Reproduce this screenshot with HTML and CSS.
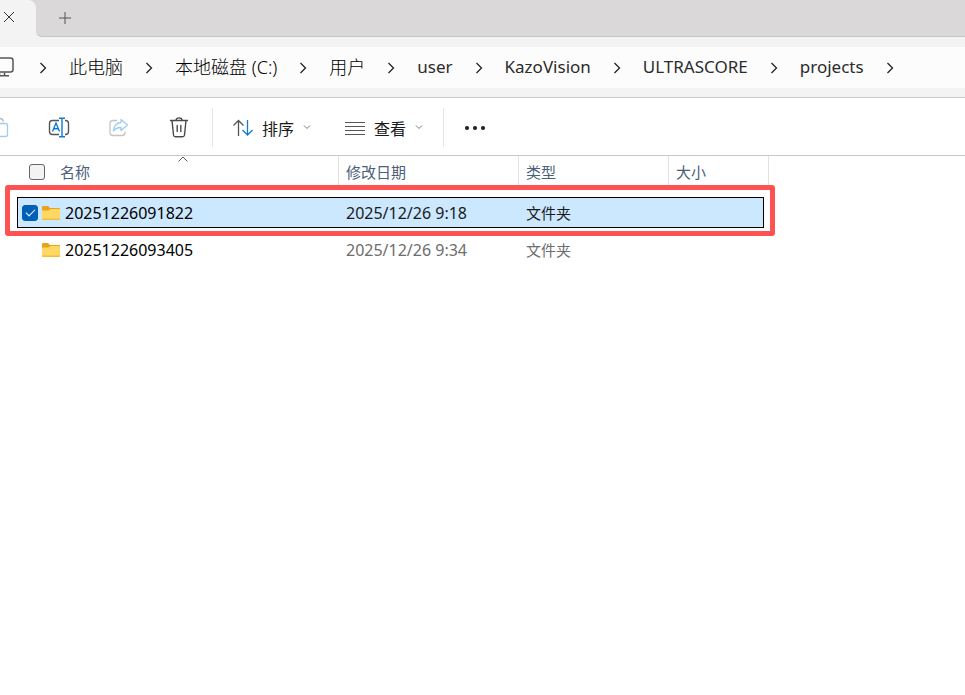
FILE: index.html
```html
<!DOCTYPE html>
<html lang="zh-CN">
<head>
    <meta charset="utf-8">
    <meta name="viewport" content="width=device-width,initial-scale=1.0">
    <title>projects</title>
    <link rel="stylesheet" href="styles.css">
</head>
<body>
    <div class="tabbar">
        <div class="tab">
            <button class="icon-btn" aria-label="关闭标签页">
                <svg width="12" height="12" viewBox="0 0 12 12"><path d="M1 1l10 10M11 1L1 11" fill="none" stroke="#333"/></svg>
            </button>
        </div>
        <div class="strip">
            <button class="icon-btn" aria-label="新建标签页">
                <svg width="12" height="12" viewBox="0 0 12 12"><path d="M0 6h12M6 0v12" fill="none" stroke="#555"/></svg>
            </button>
        </div>
    </div>

    <nav class="nav">
        <div class="address">
            <svg class="pc" width="24" height="20" viewBox="0 0 24 20" fill="none" stroke="#555" stroke-width="1.5"><rect x="1" y="1" width="22" height="14" rx="2.5"/><path d="M9.500 15.500v3M14.500 15.500v3M6 18.700h13"/></svg>
            <svg class="chev" viewBox="0 0 8 12"><path d="M1.500 1l5 5-5 5"/></svg>
            <a href="#" class="zh">此电脑</a>
            <svg class="chev" viewBox="0 0 8 12"><path d="M1.500 1l5 5-5 5"/></svg>
            <a href="#" class="zh">本地磁盘 (C:)</a>
            <svg class="chev" viewBox="0 0 8 12"><path d="M1.500 1l5 5-5 5"/></svg>
            <a href="#" class="zh">用户</a>
            <svg class="chev" viewBox="0 0 8 12"><path d="M1.500 1l5 5-5 5"/></svg>
            <a href="#">user</a>
            <svg class="chev" viewBox="0 0 8 12"><path d="M1.500 1l5 5-5 5"/></svg>
            <a href="#">KazoVision</a>
            <svg class="chev" viewBox="0 0 8 12"><path d="M1.500 1l5 5-5 5"/></svg>
            <a href="#">ULTRASCORE</a>
            <svg class="chev" viewBox="0 0 8 12"><path d="M1.500 1l5 5-5 5"/></svg>
            <a href="#">projects</a>
            <svg class="chev" viewBox="0 0 8 12"><path d="M1.500 1l5 5-5 5"/></svg>
        </div>
    </nav>

    <div class="toolbar">
        <button class="tool" aria-label="粘贴" disabled>
            <svg width="22" height="22" viewBox="0 0 22 22" fill="none" stroke-width="1.3"><path d="M8 20H5a2 2 0 0 1-2-2V5a2 2 0 0 1 2-2h1M12 1.500c2 0 3 1 3.500 3" stroke="#bbb"/><rect x="9" y="6.500" width="10.500" height="13" rx="2" stroke="#9fccf0"/></svg>
        </button>
        <button class="tool" aria-label="重命名">
            <svg width="22" height="22" viewBox="0 0 22 22" fill="none" stroke-width="1.4"><path d="M11 3.500H4.500a3 3 0 0 0-3 3v8a3 3 0 0 0 3 3H11M17 3.500h.5a3 3 0 0 1 3 3v8a3 3 0 0 1-3 3H17" stroke="#555"/><path d="M14 1.500v18M11 1.200h6M11 19.800h6M4.500 14.500L8 6l3.500 8.500M5.800 11.800h4.400" stroke="#0f7bd4"/></svg>
        </button>
        <button class="tool" aria-label="共享" disabled>
            <svg width="22" height="22" viewBox="0 0 22 22" fill="none" stroke-width="1.3" stroke-linejoin="round"><path d="M9 3.500H5a3 3 0 0 0-3 3v9a3 3 0 0 0 3 3h9a3 3 0 0 0 3-3v-1" stroke="#c4c4c4"/><path d="M13 2.500l6.500 5.500-6.500 5.500v-3c-3.500-.2-5.500 1-7.500 3.500.3-4.500 2.500-8 7.500-8.500z" stroke="#9fccf0"/></svg>
        </button>
        <button class="tool" aria-label="删除">
            <svg width="22" height="22" viewBox="0 0 22 22" fill="none" stroke="#4a4a4a" stroke-width="1.4" stroke-linecap="round"><path d="M2.500 3.500h17M8 3.500c0-3.500 6-3.500 6 0M4 3.500l1.500 14.500a2 2 0 0 0 2 1.800h7a2 2 0 0 0 2-1.800L18 3.500M9.200 8.500v6M12.800 8.500v6"/></svg>
        </button>
        <span class="sep"></span>
        <button class="tool menu">
            <svg width="20" height="18" viewBox="0 0 20 18" fill="none" stroke-width="1.3"><path d="M5.500 17V2M.5 6.500l5-5 5 5" stroke="#555"/><path d="M14.500 1v15M9.500 11l5 5 5-5" stroke="#0f7bd4"/></svg>
            <span>排序</span>
            <svg class="down" viewBox="0 0 8 5"><path d="M1 .5l3 3 3-3"/></svg>
        </button>
        <button class="tool menu">
            <svg width="20" height="18" viewBox="0 0 20 18"><path d="M0 3.500h20M0 7.500h20M0 11.500h20M0 15.500h20" fill="none" stroke="#555"/></svg>
            <span>查看</span>
            <svg class="down" viewBox="0 0 8 5"><path d="M1 .5l3 3 3-3"/></svg>
        </button>
        <span class="sep"></span>
        <button class="tool more" aria-label="更多">
            <svg width="20" height="4" viewBox="0 0 20 4" fill="#1a1a1a"><circle cx="2" cy="2" r="2"/><circle cx="10" cy="2" r="2"/><circle cx="18" cy="2" r="2"/></svg>
        </button>
    </div>

    <main class="list">
        <table class="files">
            <colgroup><col class="c-name"><col class="c-date"><col class="c-type"><col class="c-size"></colgroup>
            <thead>
                <tr>
                    <th>
                        <div class="head-name">
                            <input type="checkbox" class="check" aria-label="全选">
                            <span>名称</span>
                            <svg class="sort-mark" width="10" height="6" viewBox="0 0 10 6"><path d="M.5 5.500L5 1l4.500 4.500" fill="none" stroke="#555"/></svg>
                        </div>
                    </th>
                    <th>修改日期</th>
                    <th>类型</th>
                    <th>大小</th>
                </tr>
            </thead>
            <tbody>
                <tr class="selected">
                    <td>
                        <div class="name">
                            <input type="checkbox" class="check" aria-label="20251226091822" checked>
                            <svg width="18" height="14" viewBox="0 0 18 14"><path d="M0 1a1 1 0 0 1 1-1h5l2 2h9a1 1 0 0 1 1 1v4H0z" fill="#e8a317"/><path d="M0 4.500h6.500l2-1.500H17a1 1 0 0 1 1 1v9a1 1 0 0 1-1 1H1a1 1 0 0 1-1-1z" fill="#ffd765"/><path d="M0 12.500h18v.5a1 1 0 0 1-1 1H1a1 1 0 0 1-1-1z" fill="#f3bd3c"/></svg>
                            <span>20251226091822</span>
                        </div>
                    </td>
                    <td>2025/12/26 9:18</td>
                    <td class="type">文件夹</td>
                    <td></td>
                </tr>
                <tr>
                    <td>
                        <div class="name">
                            <input type="checkbox" class="check off" aria-label="20251226093405">
                            <svg width="18" height="14" viewBox="0 0 18 14"><path d="M0 1a1 1 0 0 1 1-1h5l2 2h9a1 1 0 0 1 1 1v4H0z" fill="#e8a317"/><path d="M0 4.500h6.500l2-1.500H17a1 1 0 0 1 1 1v9a1 1 0 0 1-1 1H1a1 1 0 0 1-1-1z" fill="#ffd765"/><path d="M0 12.500h18v.5a1 1 0 0 1-1 1H1a1 1 0 0 1-1-1z" fill="#f3bd3c"/></svg>
                            <span>20251226093405</span>
                        </div>
                    </td>
                    <td>2025/12/26 9:34</td>
                    <td class="type">文件夹</td>
                    <td></td>
                </tr>
            </tbody>
        </table>
        <div class="highlight"></div>
    </main>
</body>
</html>
```

FILE: styles.css
```css
* { box-sizing: border-box; }
body { margin: 0; background: #fff; color: #1a1a1a; font-family: "Noto Sans", "Noto Sans CJK SC", sans-serif; font-size: 16px; overflow-x: hidden; }
button { border: 0; padding: 0; background: none; font: inherit; color: inherit; }
svg { display: block; flex: none; }

.tabbar { display: flex; height: 37px; background: linear-gradient(#dad8d8 50%, #f3f3f3 50%); }
.tab { width: 36px; padding: 11px 3px; background: #f3f3f3; border-top-right-radius: 8px; }
.strip { flex: 1; padding: 12px 23px; background: #dad8d8; border-bottom: 1px solid #c6c5c5; border-bottom-left-radius: 6px; }
.icon-btn { display: block; }

.nav { padding: 10px 0 9px; background: #f3f3f3; border-bottom: 1px solid #c8c8c8; }
.address { display: flex; align-items: center; gap: 22px; height: 41px; padding-bottom: 2px; background: #fcfcfc; font-size: 17px; line-height: 24px; white-space: nowrap; }
.address a { color: #2b2b2b; text-decoration: none; }
.address .zh { color: #000; font-size: 18px; font-weight: 300; }
.pc { margin: 0 3px 0 -10px; }
.chev { width: 8px; height: 12px; margin-top: 2px; fill: none; stroke: #222; stroke-width: 1.3; }

.toolbar { display: flex; align-items: center; height: 58px; margin-left: -31px; padding-top: 2px; border-bottom: 1px solid #c8c8c8; }
.tool { display: flex; align-items: center; justify-content: center; width: 60px; height: 40px; }
.menu { width: 112px; gap: 9px; font-family: "Noto Sans CJK SC", sans-serif; }
.menu span { line-height: 24px; }
.more { width: 56px; }
.down { width: 8px; height: 5px; fill: none; stroke: #777; }
.sep { width: 1px; height: 39px; margin: 0 3px; background: #e5e5e5; }

.list { position: relative; }
.files { width: 769px; table-layout: fixed; border-collapse: separate; border-spacing: 0; }
.c-name { width: 339px; }
.c-date { width: 180px; }
.c-type { width: 150px; }
.c-size { width: 100px; }
th { height: 38px; padding: 0 7px; border-bottom: 6px solid transparent; box-shadow: inset -1px 0 #e2e2e2; color: #4c607a; font-size: 15px; font-weight: 400; line-height: 20px; text-align: left; }
th:first-child { padding: 0 0 0 29px; }
.head-name { position: relative; display: flex; align-items: center; gap: 15px; height: 32px; }
.sort-mark { position: absolute; top: 0; left: 149px; }
td { height: 37px; padding: 0 7px; border: 3px solid transparent; border-left: 0; border-right: 0; background-clip: padding-box; color: #6d6d6d; line-height: 24px; }
td:first-child { padding: 0 0 0 5px; border-left: 17px solid transparent; color: #000; }
td:last-child { border-right: 5px solid transparent; }
.type { font-size: 15px; }
.name { display: flex; align-items: center; gap: 5px; }
.name .check { margin-right: -1px; }
.selected td { background-color: #cce8ff; box-shadow: inset 0 1px #000, inset 0 -1px #000; color: #1a1a1a; }
.selected td:first-child { box-shadow: inset 1px 0 #000, inset 0 1px #000, inset 0 -1px #000; color: #000; }
.selected td:last-child { box-shadow: inset -1px 0 #000, inset 0 1px #000, inset 0 -1px #000; }

.check { flex: none; appearance: none; width: 16px; height: 16px; margin: 0; border: 1px solid #666; border-radius: 3px; background: #f3f3f3; }
.check:checked { display: grid; place-items: center; border-color: #005fb8; background: #005fb8; }
.check:checked::before { content: ""; width: 8px; height: 4px; margin-bottom: 2px; border: solid #fff; border-width: 0 0 1px 1px; transform: rotate(-45deg); }
.off { opacity: 0; }

.highlight { position: absolute; top: 29px; left: 5px; width: 770px; height: 51px; border: 5px solid #ff5252; border-radius: 3px; pointer-events: none; }
```
